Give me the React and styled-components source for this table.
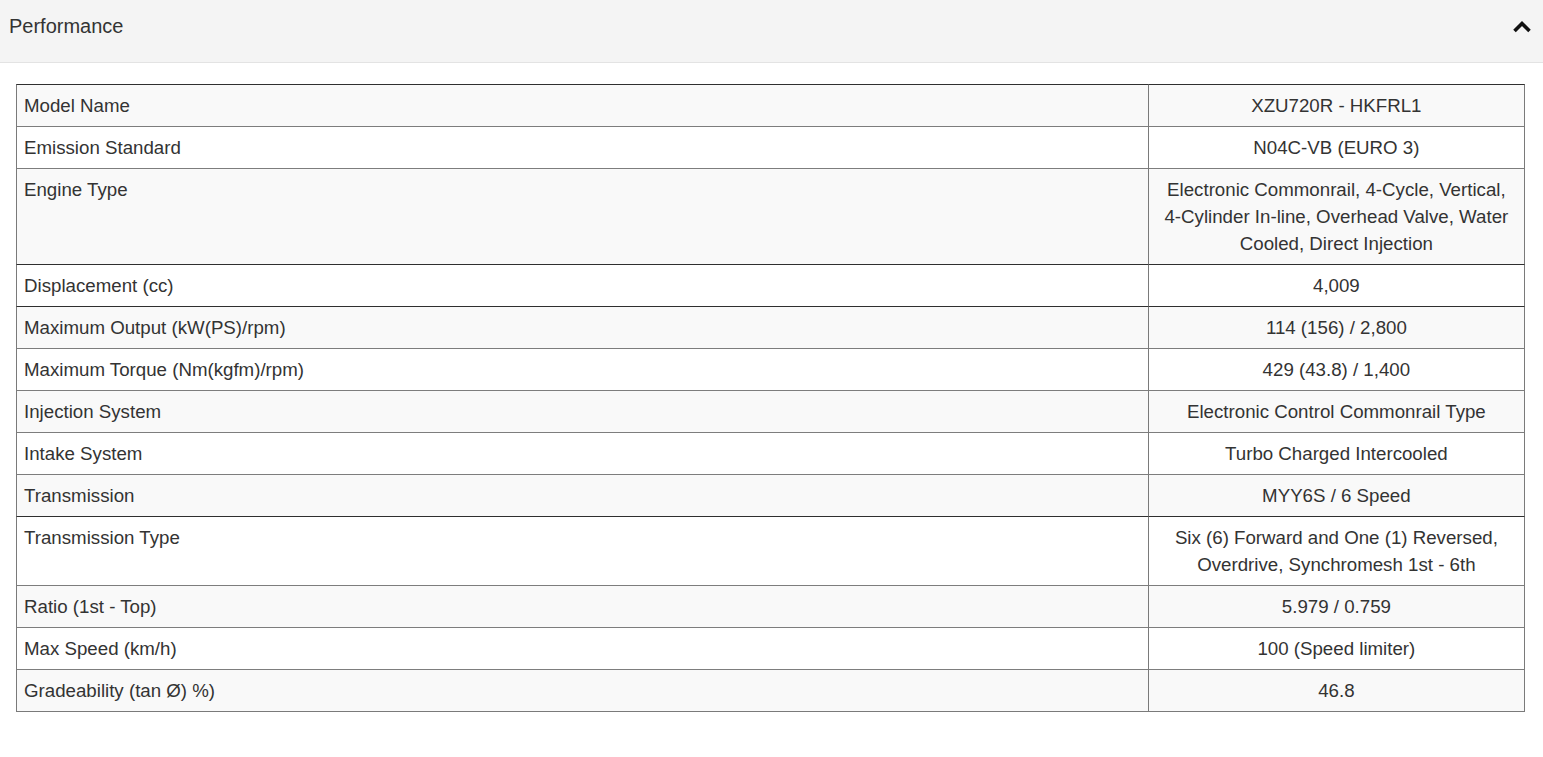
import React from 'react';
import styled, { createGlobalStyle } from 'styled-components';

const specs = [
  ['Model Name', 'XZU720R - HKFRL1', true],
  ['Emission Standard', 'N04C-VB (EURO 3)'],
  ['Engine Type', 'Electronic Commonrail, 4-Cycle, Vertical, 4-Cylinder In-line, Overhead Valve, Water Cooled, Direct Injection'],
  ['Displacement (cc)', '4,009', true],
  ['Maximum Output (kW(PS)/rpm)', '114 (156) / 2,800', true],
  ['Maximum Torque (Nm(kgfm)/rpm)', '429 (43.8) / 1,400'],
  ['Injection System', 'Electronic Control Commonrail Type'],
  ['Intake System', 'Turbo Charged Intercooled'],
  ['Transmission', 'MYY6S / 6 Speed'],
  ['Transmission Type', 'Six (6) Forward and One (1) Reversed, Overdrive, Synchromesh 1st - 6th', true],
  ['Ratio (1st - Top)', '5.979 / 0.759'],
  ['Max Speed (km/h)', '100 (Speed limiter)'],
  ['Gradeability (tan Ø) %)', '46.8']
];

const GlobalStyle = createGlobalStyle`
  body {
    margin: 0;
    background: #fff;
    font-family: "Liberation Sans", Arial, sans-serif;
    color: #333;
  }
`;

const Panel = styled.section`
  width: 100%;
`;

const Header = styled.div`
  display: flex;
  align-items: center;
  justify-content: space-between;
  height: 62px;
  padding: 0 12px 0 9px;
  background: #f4f4f4;
  border-bottom: 1px solid #e3e3e3;
  box-sizing: content-box;
`;

const Title = styled.h2`
  margin: 0;
  font-size: 20px;
  font-weight: normal;
  color: #333;
  position: relative;
  top: -5px;
`;

const Toggle = styled.button`
  border: 0;
  background: none;
  padding: 0;
  display: flex;
  position: relative;
  top: -4px;
  left: 1px;
  cursor: pointer;
`;

const Body = styled.div`
  padding: 21px 18px 40px 16px;
`;

const Table = styled.table`
  width: 100%;
  border-collapse: separate;
  border-spacing: 0;
  font-size: 18.7px;
  line-height: 27px;
  color: #333;
  border-bottom: 1px solid #7a7a7a;
`;

const Row = styled.tr`
  background: ${p => (p.$odd ? '#f9f9f9' : '#fff')};
  & > td {
    border-top: 1px solid ${p => (p.$strong ? '#2f2f2f' : '#7d7d7d')};
  }
`;

const Label = styled.td`
  width: 75%;
  padding: 7px;
  vertical-align: top;
  border-left: 1px solid #7a7a7a;
`;

const Value = styled.td`
  width: 25%;
  padding: 7px 12px;
  text-align: center;
  vertical-align: top;
  border-left: 1px solid #7a7a7a;
  border-right: 1px solid #7a7a7a;
`;

const Chevron = () => (
  <svg width="20" height="14" viewBox="0 0 20 14">
    <polyline points="2.5,11 10,3.5 17.5,11" fill="none" stroke="#111" strokeWidth="3.6" />
  </svg>
);

const App = () => (
  <Panel>
    <GlobalStyle />
    <Header>
      <Title>Performance</Title>
      <Toggle aria-label="Collapse"><Chevron /></Toggle>
    </Header>
    <Body>
      <Table>
        <tbody>
          {specs.map(([label, value, strong], i) => (
            <Row key={label} $odd={i % 2 === 0} $strong={strong}>
              <Label>{label}</Label>
              <Value>{value}</Value>
            </Row>
          ))}
        </tbody>
      </Table>
    </Body>
  </Panel>
);

export default App;
